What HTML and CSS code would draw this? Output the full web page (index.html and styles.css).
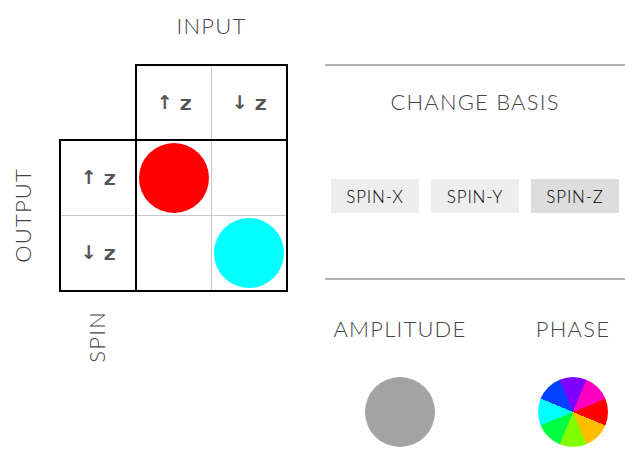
FILE: index.html
```html
<!DOCTYPE html>
<html>
<head>
<meta charset="utf-8">
<link rel="stylesheet" href="styles.css">
</head>
<body>
<div class="app">
  <div class="matrix">
    <div class="label input-label">INPUT</div>
    <div class="box header-box">
      <div class="cell"><span class="arrow">↑</span><span class="z">z</span></div>
      <div class="cell sep-left"><span class="arrow">↓</span><span class="z">z</span></div>
    </div>
    <div class="label output-label">OUTPUT</div>
    <div class="box left-box">
      <div class="cell"><span class="arrow">↑</span><span class="z">z</span></div>
      <div class="cell sep-top"><span class="arrow">↓</span><span class="z">z</span></div>
    </div>
    <div class="box main-box">
      <div class="cell"><span class="dot red"></span></div>
      <div class="cell sep-left"></div>
      <div class="cell sep-top"></div>
      <div class="cell sep-left sep-top"><span class="dot cyan"></span></div>
    </div>
    <div class="label spin-label">SPIN</div>
  </div>

  <div class="panel">
    <div class="divider"></div>
    <div class="title">CHANGE BASIS</div>
    <div class="buttons">
      <button class="btn">SPIN-X</button>
      <button class="btn">SPIN-Y</button>
      <button class="btn active">SPIN-Z</button>
    </div>
    <div class="divider"></div>
    <div class="legend">
      <div class="legend-item">
        <div class="title">AMPLITUDE</div>
        <span class="dot gray"></span>
      </div>
      <div class="legend-item">
        <div class="title">PHASE</div>
        <span class="dot wheel"></span>
      </div>
    </div>
  </div>
</div>
</body>
</html>
```

FILE: styles.css
```css
html, body {
  margin: 0;
  padding: 0;
  background: #fff;
}

.app {
  display: flex;
  align-items: flex-start;
  width: 643px;
  height: 470px;
}

.label, .title {
  font-family: "Lato", "Open Sans", sans-serif;
  font-weight: 300;
  font-size: 22px;
  letter-spacing: 1.2px;
  color: #444;
  line-height: 24px;
}

.matrix {
  display: grid;
  grid-template-columns: 59px 76px 153px;
  grid-template-rows: 64px 75px 153px auto;
  width: 300px;
}

.input-label {
  grid-column: 3;
  grid-row: 1;
  justify-self: center;
  align-self: start;
  margin-top: 14px;
}

.box {
  box-sizing: border-box;
  border: 2px solid #000;
  display: grid;
  background: #fff;
}

.header-box {
  grid-column: 3;
  grid-row: 2;
  height: 77px;
  width: 153px;
  grid-template-columns: 74px 75px;
}

.left-box {
  grid-column: 2;
  grid-row: 3;
  width: 78px;
  height: 153px;
  grid-template-rows: 74px 75px;
}

.main-box {
  grid-column: 3;
  grid-row: 3;
  width: 153px;
  height: 153px;
  grid-template-columns: 74px 75px;
  grid-template-rows: 74px 75px;
}

.cell {
  display: flex;
  align-items: center;
  justify-content: center;
  gap: 7px;
  color: #555;
}

.arrow {
  font-family: "DejaVu Sans", sans-serif;
  font-weight: bold;
  font-size: 19px;
  line-height: 20px;
  transform: translateY(-1px);
}

.z {
  display: inline-block;
  font-family: "DejaVu Sans Mono", monospace;
  font-weight: bold;
  font-size: 19px;
  line-height: 20px;
  transform: scaleX(1.2);
}

.sep-left {
  border-left: 1px solid #c8c8c8;
}

.sep-top {
  border-top: 1px solid #c8c8c8;
}

.output-label {
  grid-column: 1;
  grid-row: 3;
  writing-mode: vertical-rl;
  transform: rotate(180deg);
  justify-self: start;
  align-self: center;
  margin-left: 11px;
}

.spin-label {
  grid-column: 2;
  grid-row: 4;
  writing-mode: vertical-rl;
  transform: rotate(180deg);
  justify-self: center;
  margin-top: 19px;
}

.dot {
  display: block;
  width: 70px;
  height: 70px;
  border-radius: 50%;
}

.red { background: #ff0000; }
.cyan { background: #00ffff; }
.gray { background: #a3a3a3; }

.wheel {
  background: conic-gradient(from 22.5deg,
    #ff00c0 0deg 45deg,
    #ff0000 45deg 90deg,
    #ffbf00 90deg 135deg,
    #80ff00 135deg 180deg,
    #00ff40 180deg 225deg,
    #00ffff 225deg 270deg,
    #0040ff 270deg 315deg,
    #8000ff 315deg 360deg);
}

.panel {
  margin-left: 25px;
  margin-top: 64px;
  width: 300px;
  display: flex;
  flex-direction: column;
}

.divider {
  height: 2px;
  background: #b3b3b3;
}

.panel > .title {
  text-align: center;
  margin-top: 24px;
}

.buttons {
  display: flex;
  justify-content: center;
  gap: 12px;
  margin-top: 65px;
  margin-bottom: 65px;
}

.btn {
  width: 88px;
  height: 34px;
  border: none;
  background: #eeeeee;
  font-family: "Lato", "Open Sans", sans-serif;
  font-weight: 300;
  font-size: 17px;
  letter-spacing: 0.8px;
  color: #000;
  padding: 0;
}

.btn.active {
  background: #dddddd;
}

.legend {
  display: grid;
  grid-template-columns: 150px 104px;
  column-gap: 46px;
  margin-top: 37px;
}

.legend-item {
  display: flex;
  flex-direction: column;
  align-items: center;
  gap: 36px;
}
```
